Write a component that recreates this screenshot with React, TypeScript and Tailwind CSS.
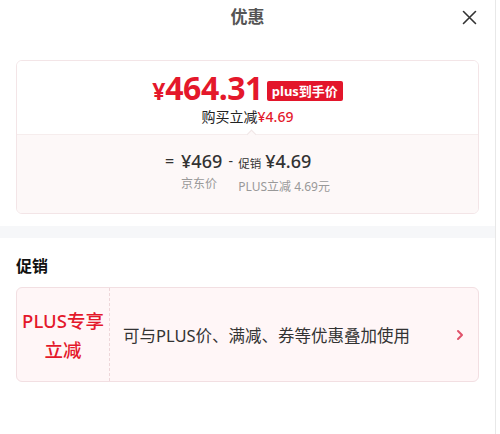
import React from 'react';

const font = { fontFamily: '"Noto Sans", "Noto Sans CJK SC", sans-serif' };

const App: React.FC = () => {
  return (
    <div className="w-[500px] h-[434px] bg-white overflow-hidden" style={font}>
      <div className="w-[496px] h-full border-r border-[#e8e8e8] flex flex-col">
        {/* header */}
        <div className="relative h-[34px] flex items-center justify-center">
          <span className="text-[17px] font-bold text-[#555]">优惠</span>
          <svg className="absolute right-[18px] top-[10px]" width="15" height="15" viewBox="0 0 15 15">
            <path d="M1.5 1.5L13.5 13.5M13.5 1.5L1.5 13.5" stroke="#333" strokeWidth="1.6" strokeLinecap="round" />
          </svg>
        </div>

        {/* price card */}
        <div className="mx-4 mt-[26px] h-[154px] rounded-md border border-[#f3e5e7] overflow-hidden flex flex-col">
          <div className="h-[73px] bg-white flex flex-col items-center pt-[12px]">
            <div className="flex items-center gap-[4px] h-[32px]">
              <span className="text-[#e4182b] font-bold leading-[32px] flex items-baseline">
                <span className="text-[23px]">¥</span>
                <span className="text-[32px] tracking-[-0.5px]">464.31</span>
              </span>
              <span className="bg-[#e3162b] text-white text-[13px] font-bold leading-[20px] px-[5px] rounded-[2px] mt-[3px]">plus到手价</span>
            </div>
            <div className="text-[14px] leading-[20px] mt-[2px] text-[#222]">
              购买立减<span className="text-[#e4182b] font-medium">¥4.69</span>
            </div>
          </div>
          <div className="relative flex-1 bg-[#fdf8f8] border-t border-[#f6eded] flex justify-center pt-[13px]">
            <div className="absolute left-1/2 -top-[4px] w-[7px] h-[7px] rotate-45 bg-[#fdf8f8] border-l border-t border-[#f0e6e6]" />
            <div className="flex items-start text-[#333]">
              <span className="text-[16px] leading-[26px] w-[16px] font-medium">=</span>
              <div className="flex flex-col">
                <span className="text-[18px] leading-[26px] font-medium">¥469</span>
                <span className="text-[12px] leading-[18px] text-[#999] mt-[1px]">京东价</span>
              </div>
              <span className="text-[14px] leading-[26px] w-[15px] text-center ml-[1px]">-</span>
              <div className="flex flex-col">
                <div className="flex items-baseline gap-[4px] leading-[26px]">
                  <span className="text-[11.5px]">促销</span>
                  <span className="text-[18px] font-medium">¥4.69</span>
                </div>
                <span className="text-[12px] leading-[18px] text-[#999] mt-[1px]">PLUS立减 4.69元</span>
              </div>
            </div>
          </div>
        </div>

        <div className="h-[12px] bg-[#f6f7f9] mt-[12px]" />

        {/* promotions */}
        <div className="px-4 pt-[17px]">
          <div className="text-[16px] font-bold text-[#111] leading-[22px]">促销</div>
          <div className="mt-[10px] h-[95px] rounded-md border border-[#f2dfe2] bg-[#fff6f7] flex items-center">
            <div className="w-[93px] h-full border-r border-dashed border-[#eed6d9] flex items-center justify-center text-center text-[#e4182b] text-[18.5px] font-medium leading-[29px]">
              <div>PLUS专享<br />立减</div>
            </div>
            <div className="flex-1 pl-[13px] text-[16.5px] text-[#333] leading-[22px] pt-[2px]">可与PLUS价、满减、券等优惠叠加使用</div>
            <svg className="mr-[14px]" width="8" height="12" viewBox="0 0 8 12">
              <path d="M2 2L6 6L2 10" stroke="#e0526a" strokeWidth="2" fill="none" strokeLinecap="round" strokeLinejoin="round" />
            </svg>
          </div>
        </div>
      </div>
    </div>
  );
};

export default App;
